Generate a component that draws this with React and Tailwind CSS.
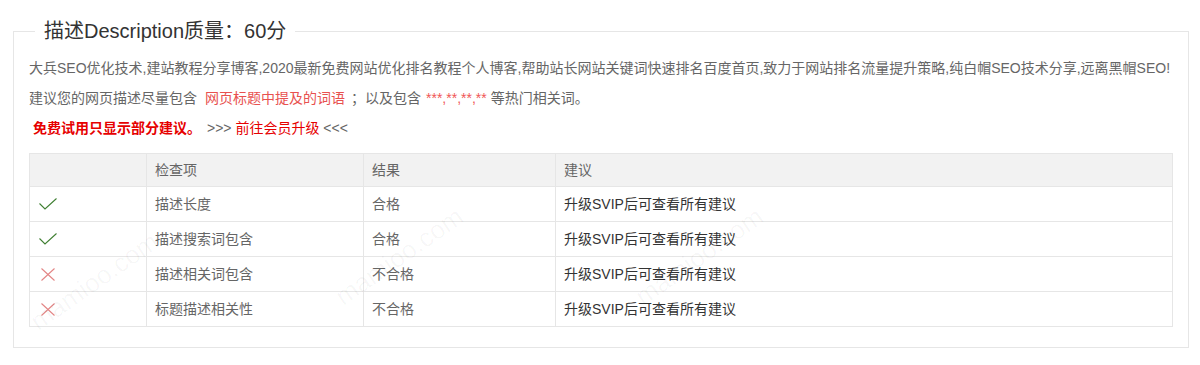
import React from 'react';

const rows = [
  { ok: true, item: '描述长度', result: '合格' },
  { ok: true, item: '描述搜索词包含', result: '合格' },
  { ok: false, item: '描述相关词包含', result: '不合格' },
  { ok: false, item: '标题描述相关性', result: '不合格' },
];

function Check() {
  return (
    <svg width="18" height="12" viewBox="0 0 18 12" fill="none">
      <path d="M0.5 5.5 L6 11 L17.5 0.5" stroke="#3f7f32" strokeWidth="1.1" />
    </svg>
  );
}

function Cross() {
  return (
    <svg width="14" height="13" viewBox="0 0 14 13" fill="none">
      <path d="M0.5 0.5 L13.5 12.5 M13.5 0.5 L0.5 12.5" stroke="#e38585" strokeWidth="1.1" />
    </svg>
  );
}

export default function App() {
  return (
    <div className="relative w-[1200px] h-[365px] bg-white pt-[18px] pl-[13px] font-['Liberation_Sans','Noto_Sans_CJK_SC',sans-serif] text-[14px] text-[#666] overflow-hidden">
      <fieldset className="w-[1176px] h-[330px] border border-[#e6e6e6] pl-[15px]">
        <legend className="ml-[6px] px-[9px] text-[20px] leading-[26px] text-[#333]">
          描述Description质量：60分
        </legend>

        {/* description text */}
        <div className="leading-[30px] mt-[9px]">
          <p>大兵SEO优化技术,建站教程分享博客,2020最新免费网站优化排名教程个人博客,帮助站长网站关键词快速排名百度首页,致力于网站排名流量提升策略,纯白帽SEO技术分享,远离黑帽SEO!</p>
          <p>
            建议您的网页描述尽量包含<span className="text-[#e8514f] ml-[8px] mr-[6px]">网页标题中提及的词语</span>；以及包含
            <span className="text-[#f05656] ml-[5px] mr-[4px]">***,**,**,**</span>等热门相关词。
          </p>
          <p className="pl-[4px]">
            <span className="text-[#e60000] font-bold">免费试用只显示部分建议。</span>
            <span className="ml-[6px]">&gt;&gt;&gt; </span>
            <span className="text-[#e60000]">前往会员升级</span>
            <span> &lt;&lt;&lt;</span>
          </p>
        </div>

        {/* checks table */}
        <table className="mt-[10px] w-[1144px] border-collapse">
          <thead>
            <tr className="bg-[#f2f2f2] h-[33px]">
              <th className="w-[117px] border border-[#e6e6e6]"></th>
              <th className="w-[217px] border border-[#e6e6e6] text-left font-normal pl-[8px]">检查项</th>
              <th className="w-[192px] border border-[#e6e6e6] text-left font-normal pl-[8px]">结果</th>
              <th className="border border-[#e6e6e6] text-left font-normal pl-[8px]">建议</th>
            </tr>
          </thead>
          <tbody>
            {rows.map((r) => (
              <tr key={r.item} className="h-[35px]">
                <td className="border border-[#e6e6e6] pl-[9px] align-middle">
                  <div className={r.ok ? 'flex -mt-[1px]' : 'flex pl-[2px]'}>
                    {r.ok ? <Check /> : <Cross />}
                  </div>
                </td>
                <td className="border border-[#e6e6e6] pl-[8px]">{r.item}</td>
                <td className="border border-[#e6e6e6] pl-[8px]">{r.result}</td>
                <td className="border border-[#e6e6e6] pl-[8px] text-[#333]">升级SVIP后可查看所有建议</td>
              </tr>
            ))}
          </tbody>
        </table>
      </fieldset>

      {/* watermarks */}
      <span className="absolute left-[20px] top-[262px] -rotate-[35deg] text-[26px] text-black/[0.035] pointer-events-none">mamioo.com</span>
      <span className="absolute left-[325px] top-[237px] -rotate-[35deg] text-[26px] text-black/[0.035] pointer-events-none">mamioo.com</span>
      <span className="absolute left-[625px] top-[237px] -rotate-[35deg] text-[26px] text-black/[0.035] pointer-events-none">mamioo.com</span>
    </div>
  );
}
